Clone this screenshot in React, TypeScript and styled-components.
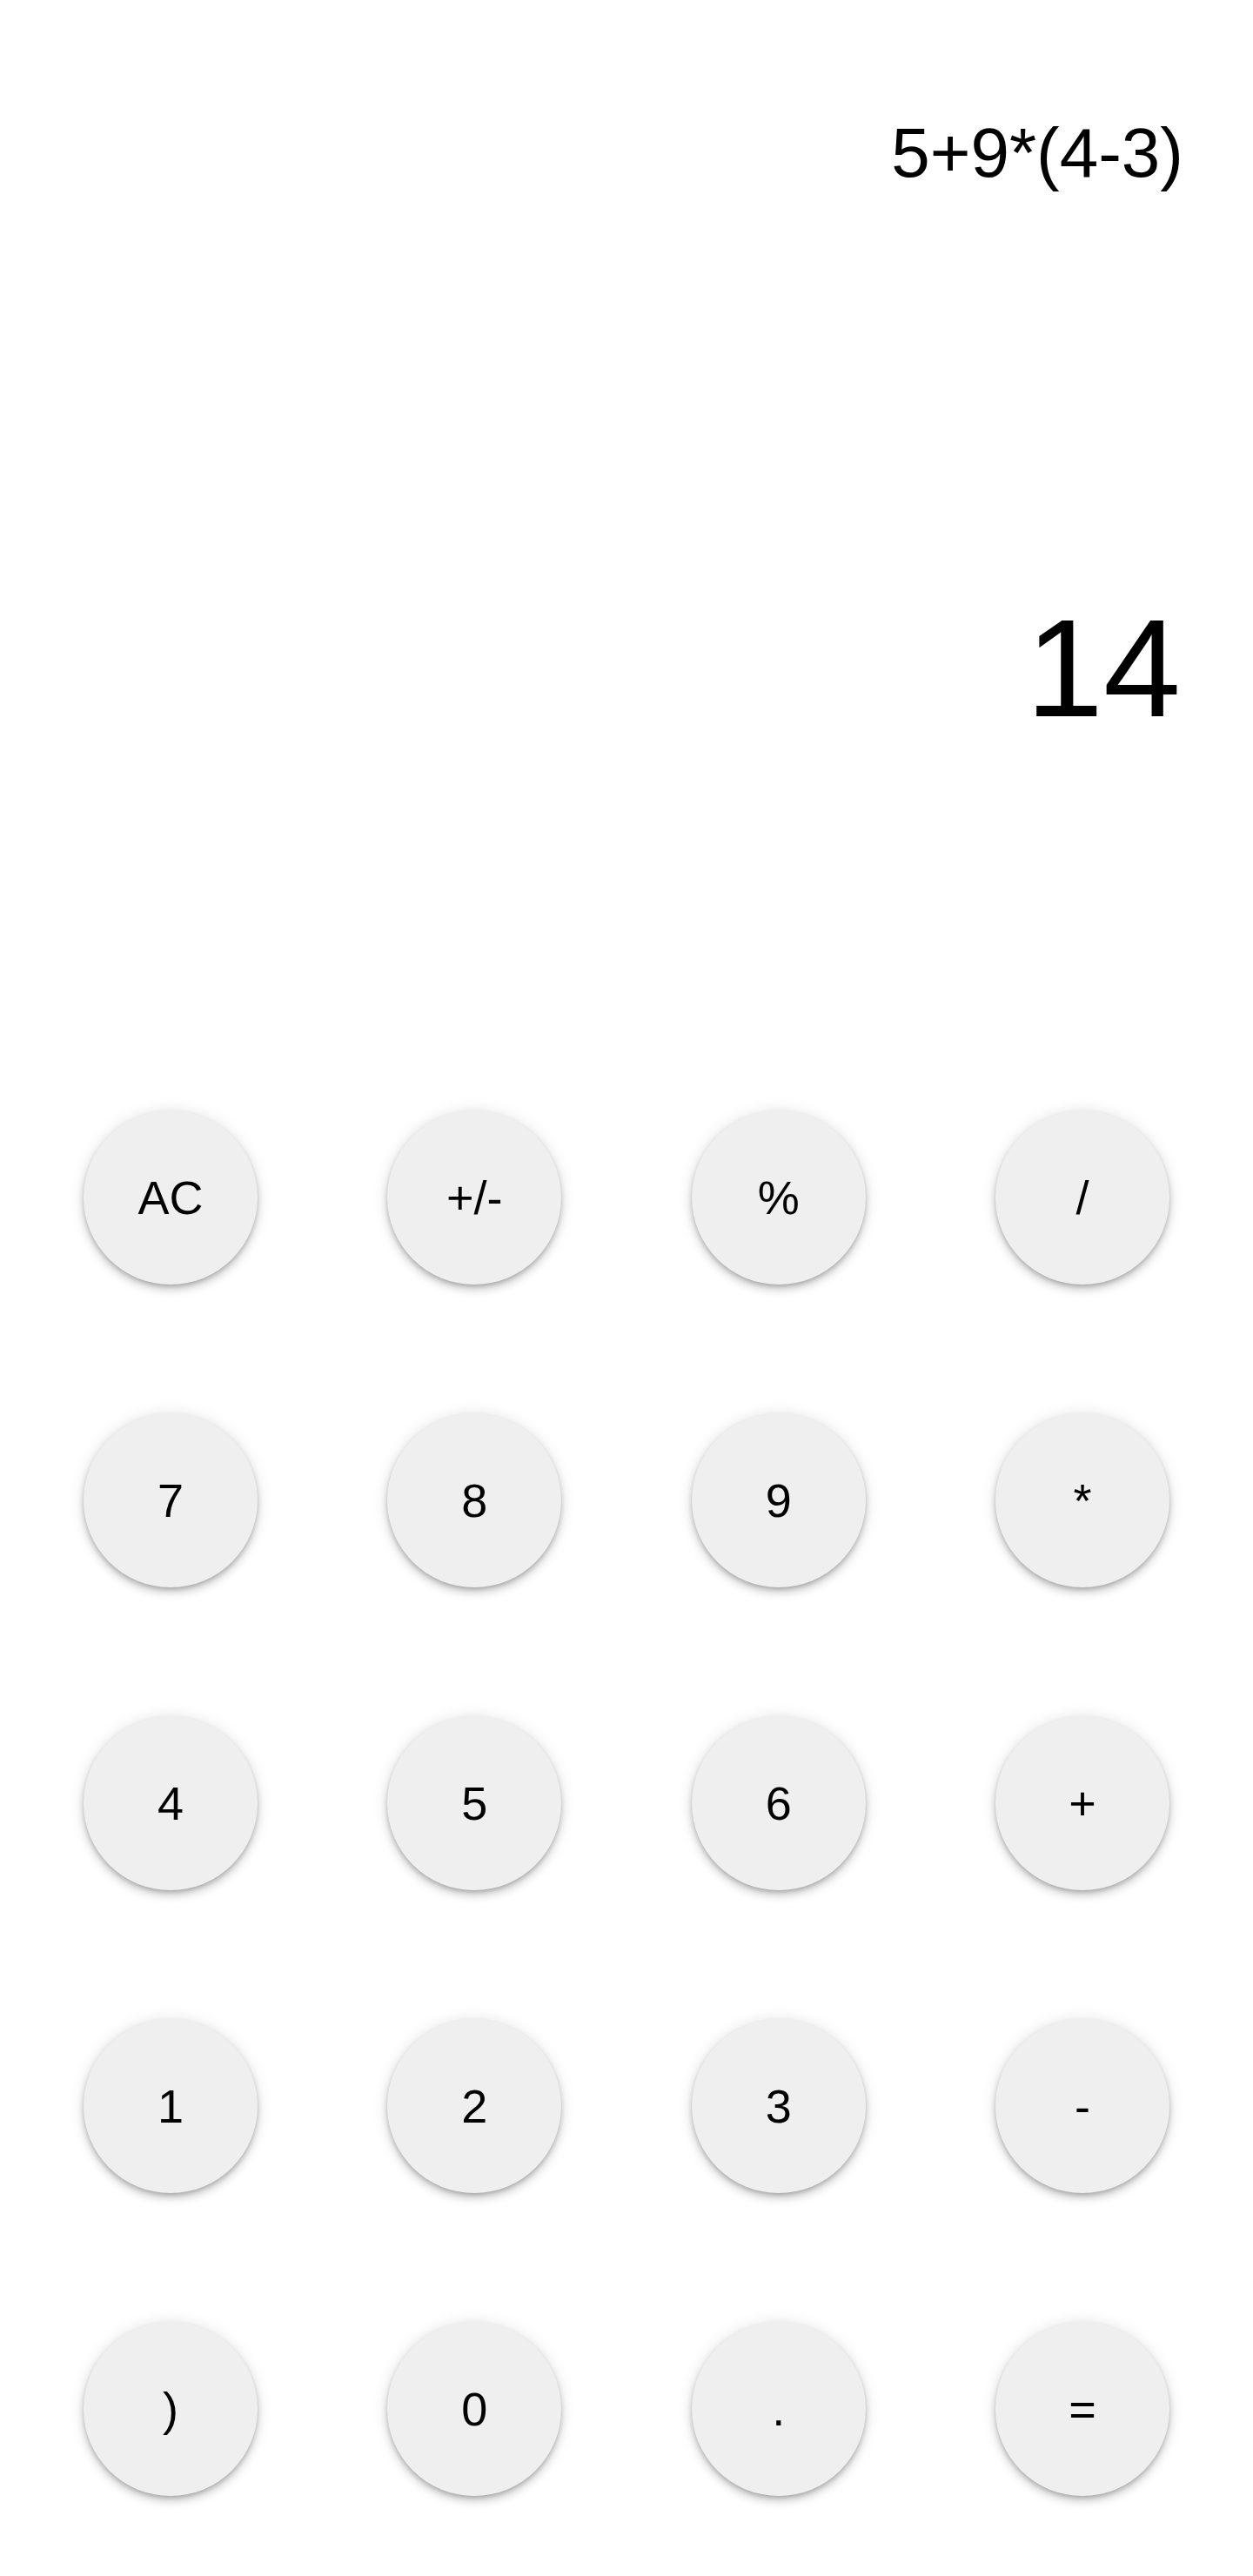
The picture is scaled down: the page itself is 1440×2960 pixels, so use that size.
import styled, { createGlobalStyle } from "styled-components";

const KEYS: readonly string[] = [
  "AC", "+/-", "%", "/",
  "7", "8", "9", "*",
  "4", "5", "6", "+",
  "1", "2", "3", "-",
  ")", "0", ".", "=",
];

const GlobalStyle = createGlobalStyle`
  html, body {
    margin: 0;
    padding: 0;
    background: #ffffff;
  }
  body {
    font-family: "Liberation Sans", Arial, sans-serif;
    color: #000000;
  }
`;

export default function App() {
  return (
    <>
      <GlobalStyle />
      <Calculator>
        <Display>
          <Expression>5+9*(4-3)</Expression>
          <Result>14</Result>
        </Display>
        <Keypad>
          {KEYS.map((key) => (
            <Key key={key} type="button">
              {key}
            </Key>
          ))}
        </Keypad>
      </Calculator>
    </>
  );
}

const Calculator = styled.div`
  width: 1440px;
  min-height: 2960px;
  display: flex;
  flex-direction: column;
  background: #ffffff;
`;

const Display = styled.div`
  display: flex;
  flex-direction: column;
  align-items: flex-end;
  gap: 472px;
  padding: 136px 80px 0;
`;

const Expression = styled.div`
  font-size: 80px;
  line-height: 1;
`;

const Result = styled.div`
  font-size: 160px;
  line-height: 1;
  margin-right: 3px;
`;

const Keypad = styled.div`
  display: grid;
  grid-template-columns: repeat(4, 200px);
  justify-content: space-between;
  row-gap: 148px;
  padding: 0 96px;
  margin-top: 428px;
`;

const Key = styled.button`
  width: 200px;
  height: 200px;
  border: none;
  border-radius: 50%;
  background: #efefef;
  color: #000000;
  font-family: "Liberation Sans", Arial, sans-serif;
  font-size: 54px;
  display: flex;
  align-items: center;
  justify-content: center;
  padding: 0;
  cursor: pointer;
  box-shadow:
    0 3px 5px -1px rgba(0, 0, 0, 0.2),
    0 6px 10px 0 rgba(0, 0, 0, 0.14),
    0 1px 18px 0 rgba(0, 0, 0, 0.12);
`;
